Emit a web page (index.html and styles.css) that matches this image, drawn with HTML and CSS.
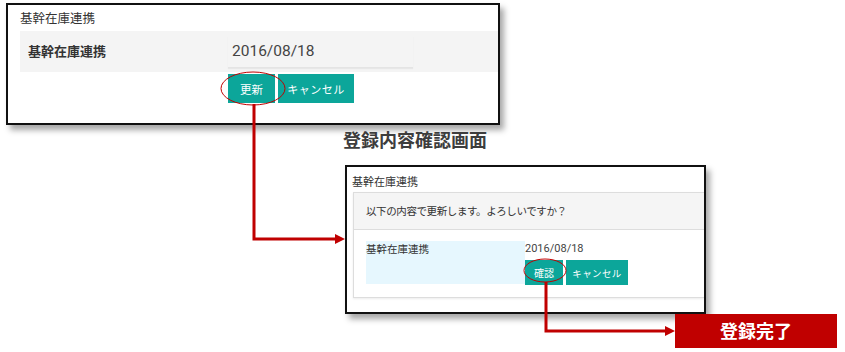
FILE: index.html
```html
<!DOCTYPE html>
<html lang="ja">

<head>
    <meta charset="UTF-8">
    <meta name="viewport" content="width=device-width, initial-scale=1.0">
    <title>基幹在庫連携 登録手順</title>
    <link rel="stylesheet" href="styles.css">
</head>

<body>
    <!-- 編集画面 -->
    <div class="shot shot-edit">
        <div class="shot-title">基幹在庫連携</div>
        <div class="edit-panel">
            <div class="edit-label">基幹在庫連携</div>
            <div class="edit-input">2016/08/18</div>
        </div>
        <div class="edit-buttons">
            <span class="btn btn-update">更新</span>
            <span class="btn btn-cancel">キャンセル</span>
        </div>
    </div>

    <h2 class="step-heading">登録内容確認画面</h2>

    <!-- 確認画面 -->
    <div class="shot shot-confirm">
        <div class="shot-title small">基幹在庫連携</div>
        <div class="confirm-panel">
            <div class="confirm-header">以下の内容で更新します。よろしいですか？</div>
            <div class="confirm-body">
                <div class="confirm-label">基幹在庫連携</div>
                <div class="confirm-value">
                    <div class="confirm-date">2016/08/18</div>
                    <div class="confirm-buttons">
                        <span class="btn btn-ok">確認</span>
                        <span class="btn btn-cancel-small">キャンセル</span>
                    </div>
                </div>
            </div>
        </div>
    </div>

    <div class="done-box">登録完了</div>

    <!-- 矢印と丸印 -->
    <svg class="arrows" width="845" height="352" viewBox="0 0 845 352">
        <ellipse cx="253" cy="88.5" rx="32" ry="16.5" fill="none" stroke="#c00000" stroke-width="1" />
        <ellipse cx="545" cy="270.5" rx="21" ry="11.5" fill="none" stroke="#c00000" stroke-width="1" />
        <path d="M254 104 V239 H337" fill="none" stroke="#c00000" stroke-width="3" />
        <polygon points="335,234 345,239 335,244" fill="#c00000" />
        <path d="M546 282 V331 H667" fill="none" stroke="#c00000" stroke-width="3" />
        <polygon points="665,326 675,331 665,336" fill="#c00000" />
    </svg>
</body>

</html>
```

FILE: styles.css
```css
body {
    margin: 0;
    width: 845px;
    height: 352px;
    position: relative;
    overflow: hidden;
    background-color: #fff;
    font-family: "Noto Sans CJK JP", "Noto Sans", sans-serif;
    color: #333;
}

.shot {
    background-color: #fff;
    border: 2px solid #111;
    box-sizing: border-box;
    box-shadow: 4px 5px 6px rgba(0, 0, 0, 0.35);
    overflow: hidden;
}

/* 編集画面 */
.shot-edit {
    margin: 3px 0 0 6px;
    width: 494px;
    height: 122px;
}

.shot-title {
    height: 26px;
    line-height: 26px;
    padding-left: 12px;
    font-size: 12.5px;
    color: #333;
}

.edit-panel {
    margin-left: 12px;
    height: 41px;
    background-color: #f4f4f4;
    display: flex;
}

.edit-label {
    width: 200px;
    padding-left: 8px;
    line-height: 40px;
    font-size: 13px;
    font-weight: bold;
    color: #333;
}

.edit-input {
    align-self: flex-end;
    margin-bottom: 4px;
    width: 185px;
    height: 32px;
    padding-left: 4px;
    box-sizing: border-box;
    line-height: 30px;
    font-family: Roboto, "Liberation Sans", sans-serif;
    font-size: 15.5px;
    color: #444;
    border-bottom: 1px solid #e4e4e4;
    box-shadow: 0 1px 1px rgba(0, 0, 0, 0.05);
}

.edit-buttons {
    display: flex;
    gap: 3px;
    margin-top: 2px;
    padding-left: 220px;
}

.btn {
    display: inline-flex;
    justify-content: center;
    align-items: center;
    background-color: #0ca69a;
    color: #fff;
    box-sizing: border-box;
}

.btn-update {
    width: 47px;
    height: 29px;
    font-size: 11.5px;
}

.btn-cancel {
    width: 76px;
    height: 29px;
    font-size: 11px;
    letter-spacing: 0.5px;
}

/* 見出し */
.step-heading {
    margin: 2px 0 0 343px;
    height: 38px;
    line-height: 24px;
    font-size: 18px;
    font-weight: bold;
    color: #3d3d3d;
}

/* 確認画面 */
.shot-confirm {
    margin-left: 345px;
    width: 361px;
    height: 149px;
}

.shot-title.small {
    height: 25px;
    line-height: 22px;
    padding: 3px 0 0 5px;
    box-sizing: border-box;
    font-size: 11px;
}

.confirm-panel {
    margin-left: 6px;
    height: 106px;
    border: 1px solid #ddd;
    border-right: none;
    box-sizing: border-box;
    box-shadow: 0 1px 2px rgba(0, 0, 0, 0.08);
}

.confirm-header {
    height: 36px;
    line-height: 36px;
    padding-left: 12px;
    background-color: #f5f5f5;
    border-bottom: 1px solid #ddd;
    font-size: 10.5px;
    letter-spacing: -0.4px;
    color: #333;
}

.confirm-body {
    display: flex;
    padding: 11px 0 0 12px;
}

.confirm-label {
    width: 159px;
    height: 43px;
    background-color: #e6f7fe;
    line-height: 16px;
    font-size: 10.5px;
    color: #333;
}

.confirm-date {
    line-height: 16px;
    font-family: Roboto, "Liberation Sans", sans-serif;
    font-size: 11px;
    color: #444;
}

.confirm-buttons {
    display: flex;
    gap: 3px;
    margin-top: 3px;
}

.btn-ok {
    width: 38px;
    height: 25px;
    font-size: 10px;
}

.btn-cancel-small {
    width: 62px;
    height: 25px;
    font-size: 9.5px;
    letter-spacing: 0.4px;
}

/* 完了 */
.done-box {
    margin-left: 675px;
    width: 162px;
    height: 34px;
    background-color: #c00000;
    color: #fff;
    font-size: 18px;
    font-weight: bold;
    text-align: center;
    line-height: 33px;
}

.arrows {
    position: absolute;
    top: 0;
    left: 0;
    pointer-events: none;
}
```
